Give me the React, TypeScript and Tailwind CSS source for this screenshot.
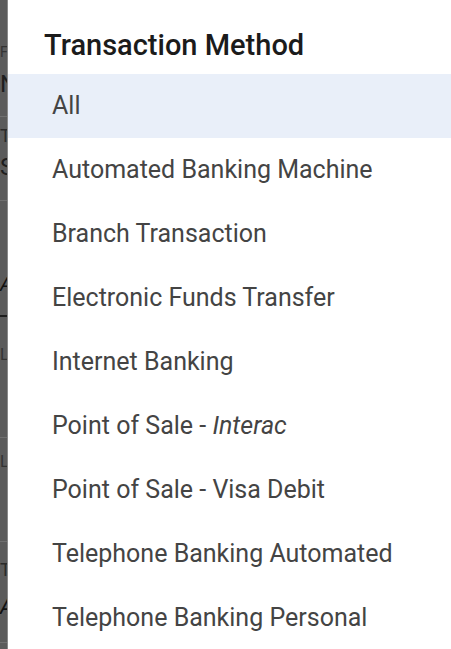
import React from "react";

const items: React.ReactNode[] = [
  "All",
  "Automated Banking Machine",
  "Branch Transaction",
  "Electronic Funds Transfer",
  "Internet Banking",
  <>
    {"Point of Sale - "}
    <i>Interac</i>
  </>,
  "Point of Sale - Visa Debit",
  "Telephone Banking Automated",
  "Telephone Banking Personal",
];

function Strip() {
  return (
    <div className="w-[8px] shrink-0 bg-[#5b5b5b] flex flex-col overflow-hidden border-r border-[#8a8a8a] text-[#1e1e1e]" style={{ fontFamily: "Roboto, sans-serif" }}>
      <div className="h-[44px]" />
      <div className="h-[16px] text-[14px] leading-[16px] text-[#333] whitespace-nowrap">F</div>
      <div className="h-[12px]" />
      <div className="h-[24px] text-[24px] leading-[24px] whitespace-nowrap">N</div>
      <div className="h-[20px]" />
      <div className="h-[1px] bg-[#707070]" />
      <div className="h-[10px]" />
      <div className="h-[18px] text-[18px] leading-[18px] text-[#2a2a2a] whitespace-nowrap">T</div>
      <div className="h-[10px]" />
      <div className="h-[24px] text-[24px] leading-[24px] whitespace-nowrap">S</div>
      <div className="h-[21px]" />
      <div className="h-[1px] bg-[#707070]" />
      <div className="h-[73px]" />
      <div className="h-[20px] text-[20px] leading-[20px] italic text-[#111] whitespace-nowrap">A</div>
      <div className="h-[21px]" />
      <div className="h-[2px] bg-[#1e1e1e]" />
      <div className="h-[30px]" />
      <div className="h-[16px] text-[16px] leading-[16px] text-[#333] whitespace-nowrap">L</div>
      <div className="h-[74px]" />
      <div className="h-[1px] bg-[#707070]" />
      <div className="h-[16px]" />
      <div className="h-[16px] text-[16px] leading-[16px] text-[#333] whitespace-nowrap">L</div>
      <div className="h-[71px]" />
      <div className="h-[1px] bg-[#707070]" />
      <div className="h-[19px]" />
      <div className="h-[18px] text-[18px] leading-[18px] text-[#2a2a2a] whitespace-nowrap">T</div>
      <div className="h-[17px]" />
      <div className="h-[22px] text-[22px] leading-[22px] italic text-[#111] whitespace-nowrap">A</div>
      <div className="h-[24px]" />
      <div className="h-[1px] bg-[#707070]" />
    </div>
  );
}

export default function App() {
  return (
    <div className="w-[451px] h-[649px] overflow-hidden flex bg-white" style={{ fontFamily: "Roboto, 'Noto Sans', sans-serif" }}>
      <Strip />
      <div className="flex-1 flex flex-col bg-white">
        <div className="pt-[28px] pb-[12px] pl-[36px]">
          <h2 className="text-[29px] leading-[34px] font-medium text-[#1b1b1b]">Transaction Method</h2>
        </div>
        <ul className="flex flex-col">
          {items.map((it, i) => (
            <li
              key={i}
              className={`h-[64px] shrink-0 flex items-center pl-[44px] text-[25px] text-[#444444] whitespace-pre ${i === 0 ? "bg-[#e9eff9]" : ""}`}
            >
              {it}
            </li>
          ))}
        </ul>
      </div>
    </div>
  );
}
